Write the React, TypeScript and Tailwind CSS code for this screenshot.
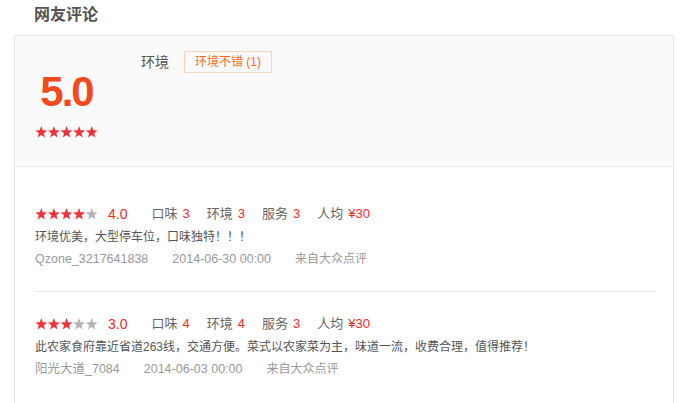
import React from 'react';

const FONT = { fontFamily: '"Liberation Sans", "Noto Sans CJK SC", sans-serif' };

const starPoints = (cx: number, cy: number, R: number, r: number) => {
    const pts: string[] = [];
    for (let i = 0; i < 10; i++) {
        const a = ((-90 + i * 36) * Math.PI) / 180;
        const rad = i % 2 === 0 ? R : r;
        pts.push(`${(cx + rad * Math.cos(a)).toFixed(2)},${(cy + rad * Math.sin(a)).toFixed(2)}`);
    }
    return pts.join(' ');
};

const Stars = ({ value }: { value: number }) => (
    <svg width="63" height="12" viewBox="0 0 63 12" className="shrink-0">
        {[0, 1, 2, 3, 4].map((i) => (
            <polygon
                key={i}
                points={starPoints(6.3 + i * 12.6, 6.4, 6.3, 2.6)}
                fill={i < value ? '#f2323a' : '#b4b4b4'}
            />
        ))}
    </svg>
);

const reviews = [
    {
        score: 4,
        taste: 3,
        env: 3,
        service: 3,
        price: '¥30',
        text: '环境优美，大型停车位，口味独特！！！',
        user: 'Qzone_3217641838',
        time: '2014-06-30 00:00',
        from: '来自大众点评',
    },
    {
        score: 3,
        taste: 4,
        env: 4,
        service: 3,
        price: '¥30',
        text: '此农家食府靠近省道263线，交通方便。菜式以农家菜为主，味道一流，收费合理，值得推荐！',
        user: '阳光大道_7084',
        time: '2014-06-03 00:00',
        from: '来自大众点评',
    },
];

const Item = ({ label, value }: { label: string; value: string | number }) => (
    <span className="text-[13px] text-[#666]">
        {label}
        <span className="ml-[5px] text-[#ff2424]">{value}</span>
    </span>
);

export default function App() {
    return (
        <div className="w-[688px] h-[403px] overflow-hidden bg-white" style={FONT}>
            <h2 className="h-[35px] pl-[34px] pt-[4px] text-[16px] leading-[22px] font-bold text-[#555]">网友评论</h2>

            <div className="ml-[14px] w-[660px] h-[400px] border border-[#e6e6e6]">
                {/* summary */}
                <div className="flex h-[131px] bg-[#fafafa] border-b border-[#e6e6e6]">
                    <div className="flex w-[63px] ml-[20px] pt-[35px] flex-col items-center">
                        <div className="text-[42px] leading-[42px] font-bold tracking-[-2px] text-[#f34a1d]">5.0</div>
                        <div className="mt-[13px]">
                            <Stars value={5} />
                        </div>
                    </div>
                    <div className="ml-[43px] pt-[15px] flex items-start gap-[15px]">
                        <span className="text-[14px] leading-[22px] text-[#555]">环境</span>
                        <span className="h-[22px] px-[10px] border border-[#fbd6bb] text-[12px] leading-[20px] text-[#ff6a1a]">
                            环境不错 (1)
                        </span>
                    </div>
                </div>

                {/* list */}
                <div className="pl-[20px] pr-[18px] pt-[15px]">
                    {reviews.map((r, i) => (
                        <div
                            key={i}
                            className={`pt-[20px] pb-[21px] ${i < reviews.length - 1 ? 'border-b border-[#e6e6e6]' : ''}`}
                        >
                            <div className="flex h-[24px] items-center">
                                <Stars value={r.score} />
                                <span className="ml-[10px] mr-[24px] text-[14px] text-[#ff2424]">{r.score}.0</span>
                                <div className="flex gap-[17px]">
                                    <Item label="口味" value={r.taste} />
                                    <Item label="环境" value={r.env} />
                                    <Item label="服务" value={r.service} />
                                    <Item label="人均" value={r.price} />
                                </div>
                            </div>
                            <p className="text-[12px] leading-[22px] text-[#555]">{r.text}</p>
                            <div className="flex gap-[24px] text-[12.5px] leading-[22px] text-[#999]">
                                <span>{r.user}</span>
                                <span>{r.time}</span>
                                <span className="text-[12px]">{r.from}</span>
                            </div>
                        </div>
                    ))}
                </div>
            </div>
        </div>
    );
}
